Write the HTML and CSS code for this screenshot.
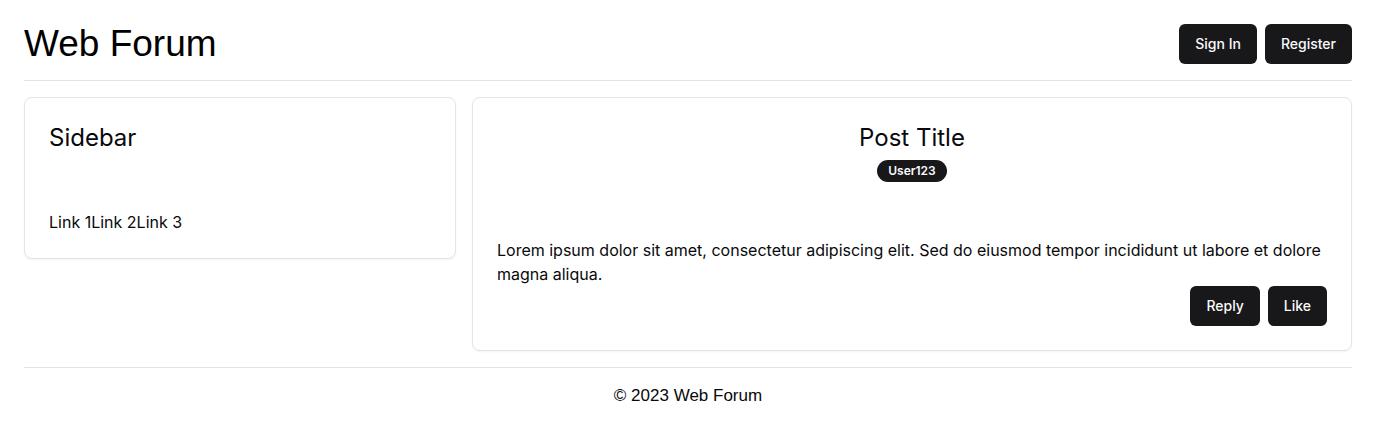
FILE: index.html
```html
<!DOCTYPE html>
<html lang="en">
<head>
<meta charset="utf-8">
<title>Web Forum</title>
<link rel="stylesheet" href="styles.css">
</head>
<body>
<div class="page">
  <header class="site-header">
    <h1 class="site-title">Web Forum</h1>
    <div class="actions">
      <button class="btn">Sign In</button>
      <button class="btn">Register</button>
    </div>
  </header>
  <main class="layout">
    <aside class="card sidebar">
      <div class="card-header">
        <h2 class="card-title">Sidebar</h2>
      </div>
      <div class="card-content">
        <nav class="links"><a href="#">Link 1</a><a href="#">Link 2</a><a href="#">Link 3</a></nav>
      </div>
    </aside>
    <article class="card post">
      <div class="card-header centered">
        <h2 class="card-title">Post Title</h2>
        <div class="badge-row"><span class="badge">User123</span></div>
      </div>
      <div class="card-content">
        <p class="post-body">Lorem ipsum dolor sit amet, consectetur adipiscing elit. Sed do eiusmod tempor incididunt ut labore et dolore magna aliqua.</p>
        <div class="post-actions">
          <button class="btn">Reply</button>
          <button class="btn">Like</button>
        </div>
      </div>
    </article>
  </main>
  <footer class="site-footer">© 2023 Web Forum</footer>
</div>
</body>
</html>
```

FILE: styles.css
```css
* { box-sizing: border-box; }
html, body { margin: 0; padding: 0; background: #ffffff; }
body {
  font-family: Inter, "Noto Sans", sans-serif;
  color: #09090b;
  font-size: 16px;
  line-height: 24px;
}
.page {
  padding: 24px 24px 0;
}
.site-header {
  display: flex;
  justify-content: space-between;
  align-items: center;
  padding-bottom: 16px;
  border-bottom: 1px solid #e4e4e7;
}
.site-title {
  margin: 0;
  font-family: "Liberation Sans", Arial, sans-serif;
  font-weight: 400;
  font-size: 37px;
  line-height: 40px;
  color: #000;
}
.actions { display: flex; gap: 8px; }
.btn {
  font-family: Inter, sans-serif;
  font-size: 14px;
  font-weight: 500;
  line-height: 20px;
  height: 40px;
  padding: 0 16px;
  border: none;
  border-radius: 6px;
  background: #18181b;
  color: #fafafa;
  cursor: pointer;
}
.layout {
  display: grid;
  grid-template-columns: 432px 1fr;
  gap: 16px;
  align-items: start;
  padding: 16px 0;
}
.card {
  border: 1px solid #e4e4e7;
  border-radius: 8px;
  background: #fff;
  box-shadow: 0 1px 2px rgba(0,0,0,0.05);
}
.card-header {
  padding: 24px 24px 0;
  display: flex;
  flex-direction: column;
  gap: 6px;
}
.card-header.centered { align-items: center; text-align: center; }
.card-title {
  margin: 0;
  font-size: 24px;
  line-height: 32px;
  font-weight: 400;
  color: #09090b;
}
.card-content { padding: 56px 24px 24px; }
.links a { color: #09090b; text-decoration: none; }
.badge-row { display: flex; justify-content: center; }
.badge {
  display: block;
  font-size: 12px;
  line-height: 16px;
  font-weight: 600;
  padding: 2px 10px;
  border: 1px solid transparent;
  border-radius: 9999px;
  background: #18181b;
  color: #fafafa;
}
.post-body { margin: 0; }
.post-actions {
  display: flex;
  justify-content: flex-end;
  gap: 8px;
}
.site-footer {
  border-top: 1px solid #e4e4e7;
  padding: 16px 0;
  text-align: center;
  font-family: "Liberation Sans", Arial, sans-serif;
  font-size: 17px;
  line-height: 24px;
  color: #09090b;
}
```
